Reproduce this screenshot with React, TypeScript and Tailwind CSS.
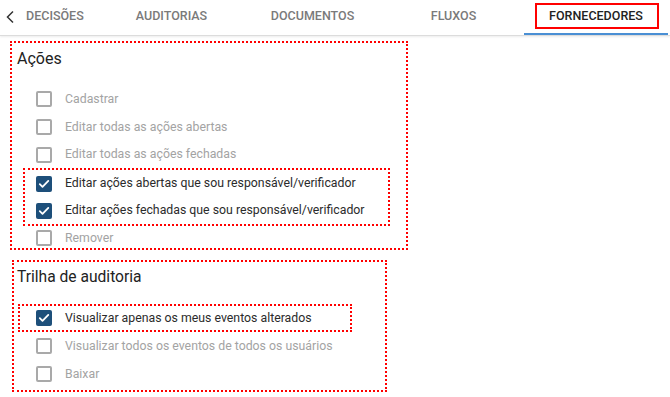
import React from 'react';

type Perm = { label: string; checked?: boolean };

const Check: React.FC<{ checked?: boolean }> = ({ checked }) =>
  checked ? (
    <span className="flex h-[16px] w-[16px] shrink-0 items-center justify-center rounded-[2px] bg-[#1d4f7a]">
      <svg width="12" height="12" viewBox="0 0 12 12" fill="none">
        <path d="M1.8 6.2l2.7 2.7 5.8-6" stroke="#fff" strokeWidth="1.8" strokeLinecap="round" strokeLinejoin="round" />
      </svg>
    </span>
  ) : (
    <span className="h-[16px] w-[16px] shrink-0 rounded-[2px] border-2 border-[#a9a9a9] bg-white" />
  );

const Row: React.FC<Perm & { h?: string; pad?: string }> = ({ label, checked, h = 'h-[28px]', pad = 'pl-[24px]' }) => (
  <div className={`flex items-center gap-[13px] ${h} ${pad}`}>
    <Check checked={checked} />
    <span className={`whitespace-nowrap text-[12.3px] leading-none ${checked ? 'text-[#2b2b2b]' : 'text-[#a3a3a3]'}`}>{label}</span>
  </div>
);

const tabs = ['AUDITORIAS', 'DOCUMENTOS', 'FLUXOS'];

export default function App() {
  return (
    <div className="h-[397px] w-[670px] overflow-hidden bg-white font-['Roboto',sans-serif]">
      {/* Tab bar */}
      <div className="flex h-[36px] border-b border-[#dcdcdc] shadow-[0_1px_2px_rgba(0,0,0,0.08)]">
        <div className="flex w-[20px] items-center justify-center pb-[2px]">
          <svg width="10" height="14" viewBox="0 0 10 14" fill="none">
            <path d="M8 1.5L2.5 7 8 12.5" stroke="#333" strokeWidth="1.5" />
          </svg>
        </div>
        <div className="flex w-[81px] items-center pl-[6px] pb-[2px] text-[12.5px] font-medium text-[#7a7a7a]">DECISÕES</div>
        {tabs.map((t) => (
          <div key={t} className="flex w-[141px] items-center justify-center pb-[2px] text-[12.5px] font-medium text-[#7a7a7a]">
            {t}
          </div>
        ))}
        <div className="relative flex w-[144px] items-center justify-center border-b-2 border-[#4a8fd4] text-[12.5px] font-medium text-[#222]">
          FORNECEDORES
          <div className="absolute left-[11px] top-[3px] h-[26px] w-[124px] border-2 border-[#ff0000]" />
        </div>
      </div>

      {/* Ações */}
      <div className="ml-[10px] mt-[5px] h-[209px] w-[398px] border-2 border-dotted border-[#ff0000]">
        <div className="flex h-[28px] items-center pl-[5px] pt-[3px] text-[16px] text-[#222]">Ações</div>
        <div className="mt-[14px]">
          <Row label="Cadastrar" />
          <Row label="Editar todas as ações abertas" />
          <Row label="Editar todas as ações fechadas" h="h-[27px]" />
        </div>
        <div className="ml-[11px] w-[367px] border-2 border-dotted border-[#ff0000]">
          <Row label="Editar ações abertas que sou responsável/verificador" checked h="h-[27px]" pad="pl-[11px]" />
          <Row label="Editar ações fechadas que sou responsável/verificador" checked h="h-[27px]" pad="pl-[11px]" />
        </div>
        <Row label="Remover" h="h-[24px]" />
      </div>

      {/* Trilha de auditoria */}
      <div className="ml-[12px] mt-[10px] h-[132px] w-[375px] border-2 border-dotted border-[#ff0000]">
        <div className="flex h-[28px] items-center pl-[3px] pt-[4px] text-[15.6px] text-[#222]">Trilha de auditoria</div>
        <div className="ml-[4px] mt-[14px] w-[334px] border-2 border-dotted border-[#ff0000]">
          <Row label="Visualizar apenas os meus eventos alterados" checked h="h-[24px]" pad="pl-[16px]" />
        </div>
        <Row label="Visualizar todos os eventos de todos os usuários" pad="pl-[22px]" />
        <Row label="Baixar" pad="pl-[22px]" />
      </div>
    </div>
  );
}
